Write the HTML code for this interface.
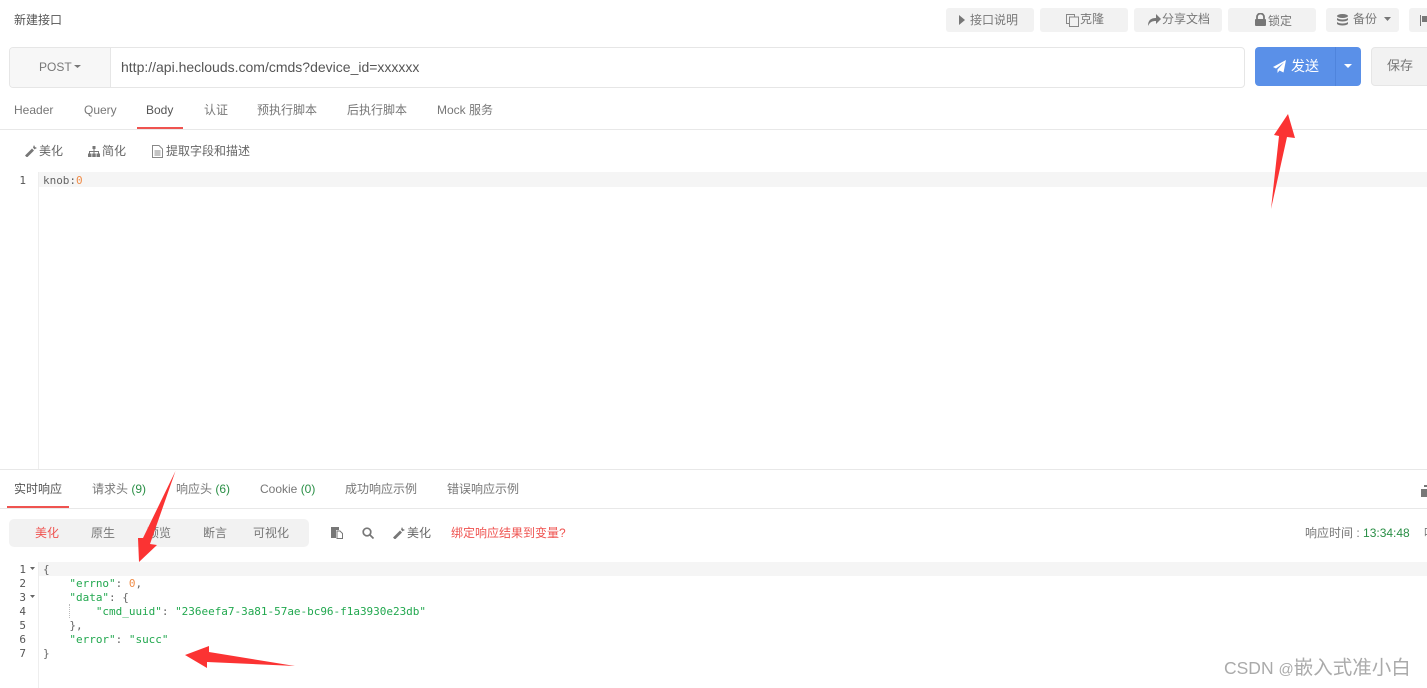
<!DOCTYPE html>
<html lang="zh"><head><meta charset="utf-8"><title>新建接口</title>
<style>
html,body{margin:0;padding:0;background:#fff}
#p{position:relative;width:1427px;height:688px;overflow:hidden;background:#fff;font-family:"Liberation Sans","Noto Sans CJK SC",sans-serif;font-size:12px;color:#777}
#p>*{position:absolute}
.t{height:20px;line-height:20px;white-space:nowrap}
.b{background:#f2f2f2;border-radius:3px;top:8px;height:24px}
.m{font-family:"DejaVu Sans Mono",monospace;font-size:11px;height:14px;line-height:14px;white-space:pre;color:#666;letter-spacing:-.02px}
.s{color:#22a84f}.o{color:#f08d49}.g{color:#2a8f46}
.n{color:#555;text-align:right;width:26px;left:0}
svg{display:block}
</style></head><body><div id="p">
<div class="t" style="left:14px;top:10px;color:#555">新建接口</div>

<div class="b" style="left:946px;width:88px"></div>
<div class="b" style="left:1040px;width:88px"></div>
<div class="b" style="left:1134px;width:88px"></div>
<div class="b" style="left:1228px;width:88px"></div>
<div class="b" style="left:1326px;width:73px"></div>
<div class="b" style="left:1409px;width:30px"></div>
<svg style="left:959px;top:15px" width="6" height="10"><path d="M0 0L6 5L0 10Z" fill="#777"/></svg>
<div class="t" style="left:970px;top:10px">接口说明</div>
<svg style="left:1066px;top:14px" width="13" height="13" fill="none" stroke="#888"><path d="M8.500 2.500V.5H.5V9.500H3"/><rect x="3.500" y="3" width="9" height="9.500"/></svg>
<div class="t" style="left:1080px;top:9px">克隆</div>
<svg style="left:1148px;top:14px" width="13" height="12"><path d="M0 12C0 6 3 4 8 4V0L13 5L8 10V7C4 7 2 8 0 12Z" fill="#777"/></svg>
<div class="t" style="left:1162px;top:9px">分享文档</div>
<svg style="left:1255px;top:13px" width="11" height="13"><path d="M2 6V4a3.500 3.500 0 017 0V6" fill="none" stroke="#777" stroke-width="1.800"/><rect y="6" width="11" height="7" rx="1" fill="#777"/></svg>
<div class="t" style="left:1268px;top:11px">锁定</div>
<svg style="left:1337px;top:14px" width="11" height="12"><g fill="#777"><ellipse cx="5.500" cy="2" rx="5.500" ry="2"/><path d="M0 4C2 6 9 6 11 4V6C9 8 2 8 0 6ZM0 8C2 10 9 10 11 8V10C9 12 2 12 0 10Z"/></g></svg>
<div class="t" style="left:1353px;top:9px">备份</div>
<svg style="left:1384px;top:17px" width="7" height="4"><path d="M0 0H7L3.500 4Z" fill="#777"/></svg>
<svg style="left:1420px;top:15px" width="7" height="11"><path d="M0 0H1V11H0ZM2 1H7V7H2Z" fill="#777"/></svg>

<div style="left:9px;top:47px;width:1234px;height:39px;border:1px solid #e6e6e6;border-radius:4px"></div>
<div style="left:10px;top:48px;width:100px;height:39px;background:#f7f7f7;border-right:1px solid #e6e6e6;border-radius:3px 0 0 3px"></div>
<div class="t" style="left:39px;top:57px;color:#777">POST</div>
<svg style="left:74px;top:65px" width="7" height="3"><path d="M0 0H7L3.500 3Z" fill="#777"/></svg>
<div class="t" style="left:121px;top:57px;font-size:14px;color:#555">http://api.heclouds.com/cmds?device_id=xxxxxx</div>

<div style="left:1255px;top:47px;width:106px;height:39px;background:#5a90e8;border-radius:4px"></div>
<div style="left:1335px;top:47px;width:1px;height:39px;background:#4f84dc"></div>
<svg style="left:1273px;top:60px" width="13" height="13"><path d="M13 0L10.500 12.500L6.500 10.500L4.500 13V9.500L11 2.500L3 8.500L0 7Z" fill="#fff"/></svg>
<div class="t" style="left:1291px;top:56px;font-size:14px;color:#fff">发送</div>
<svg style="left:1344px;top:64px" width="8" height="4"><path d="M0 0H8L4 4Z" fill="#fff"/></svg>
<div style="left:1371px;top:47px;width:70px;height:37px;background:#f2f2f2;border:1px solid #e6e6e6;border-radius:4px"></div>
<div class="t" style="left:1387px;top:56px;font-size:13px;color:#777">保存</div>

<div class="t" style="left:14px;top:100px">Header</div>
<div class="t" style="left:84px;top:100px">Query</div>
<div class="t" style="left:146px;top:100px;color:#555">Body</div>
<div class="t" style="left:204px;top:100px">认证</div>
<div class="t" style="left:257px;top:100px">预执行脚本</div>
<div class="t" style="left:347px;top:100px">后执行脚本</div>
<div class="t" style="left:437px;top:100px">Mock 服务</div>
<div style="left:0;top:129px;width:1427px;height:1px;background:#e8e8e8"></div>
<div style="left:137px;top:127px;width:46px;height:2px;background:#ef5350"></div>

<svg style="left:25px;top:145px" width="12" height="12"><path d="M0 10.500L7 3.500L9 5.500L2 12.500ZM8 2.500L9 0L10 2L12 3L10 4L9.500 4.500Z" fill="#777"/></svg>
<div class="t" style="left:39px;top:141px;color:#666">美化</div>
<svg style="left:88px;top:146px" width="12" height="11" fill="#777"><rect x="4.500" width="3" height="3"/><rect y="7.500" width="3.500" height="3.500"/><rect x="4.250" y="7.500" width="3.500" height="3.500"/><rect x="8.500" y="7.500" width="3.500" height="3.500"/><path d="M1 5H11V7.500H10V6H6.500V7.500H5.500V6H2V7.500H1ZM5.500 3H6.500V5H5.500Z"/></svg>
<div class="t" style="left:102px;top:141px;color:#666">简化</div>
<svg style="left:152px;top:145px" width="11" height="13" fill="none" stroke="#888"><path d="M.5.500H7L10.500 4V12.500H.5ZM2.500 6H8.500M2.500 8H8.500M2.500 10H8.500"/></svg>
<div class="t" style="left:166px;top:141px;color:#666">提取字段和描述</div>

<div style="left:38px;top:172px;width:1389px;height:15px;background:#f5f5f5"></div>
<div style="left:38px;top:172px;width:1px;height:297px;background:#eee"></div>
<div class="m n" style="top:174px">1</div>
<div class="m" style="left:43px;top:174px">knob:<span class="o">0</span></div>

<div style="left:0;top:469px;width:1427px;height:1px;background:#e8e8e8"></div>
<div class="t" style="left:14px;top:479px;color:#555">实时响应</div>
<div class="t" style="left:92px;top:479px">请求头 <span class="g">(9)</span></div>
<div class="t" style="left:176px;top:479px">响应头 <span class="g">(6)</span></div>
<div class="t" style="left:260px;top:479px">Cookie <span class="g">(0)</span></div>
<div class="t" style="left:345px;top:479px">成功响应示例</div>
<div class="t" style="left:447px;top:479px">错误响应示例</div>
<div style="left:0;top:508px;width:1427px;height:1px;background:#e8e8e8"></div>
<div style="left:7px;top:506px;width:62px;height:2px;background:#ef5350"></div>
<svg style="left:1421px;top:485px" width="6" height="12"><path d="M3 0H6V2H3V4H6V12H0V4H3Z" fill="#777"/></svg>

<div style="left:9px;top:519px;width:300px;height:28px;background:#f2f2f2;border-radius:5px"></div>
<div class="t" style="left:35px;top:523px;color:#ef5350">美化</div>
<div class="t" style="left:91px;top:523px">原生</div>
<div class="t" style="left:147px;top:523px">预览</div>
<div class="t" style="left:203px;top:523px">断言</div>
<div class="t" style="left:253px;top:523px">可视化</div>
<svg style="left:331px;top:527px" width="12" height="12"><path d="M0 0H8V3H5V11H0Z" fill="#777"/><path d="M6 4H9L11.500 6.500V11.500H6Z" fill="#fff" stroke="#777"/></svg>
<svg style="left:362px;top:527px" width="12" height="12" fill="none" stroke="#777" stroke-width="1.700"><circle cx="5" cy="5" r="3.800"/><path d="M8 8L11.500 11.500"/></svg>
<svg style="left:393px;top:527px" width="12" height="12"><path d="M0 10.500L7 3.500L9 5.500L2 12.500ZM8 2.500L9 0L10 2L12 3L10 4L9.500 4.500Z" fill="#777"/></svg>
<div class="t" style="left:407px;top:523px;color:#666">美化</div>
<div class="t" style="left:451px;top:523px;color:#ef5350">绑定响应结果到变量?</div>
<div class="t" style="left:1305px;top:523px">响应时间 : <span class="g">13:34:48</span></div>
<div class="t" style="left:1424px;top:523px">响</div>

<div style="left:38px;top:562px;width:1389px;height:14px;background:#f5f5f5"></div>
<div style="left:38px;top:562px;width:1px;height:126px;background:#eee"></div>
<div class="m n" style="top:563px">1</div>
<div class="m n" style="top:577px">2</div>
<div class="m n" style="top:591px">3</div>
<div class="m n" style="top:605px">4</div>
<div class="m n" style="top:619px">5</div>
<div class="m n" style="top:633px">6</div>
<div class="m n" style="top:647px">7</div>
<svg style="left:30px;top:567px" width="5" height="3"><path d="M0 0H5L2.500 3Z" fill="#666"/></svg>
<svg style="left:30px;top:595px" width="5" height="3"><path d="M0 0H5L2.500 3Z" fill="#666"/></svg>
<div class="m" style="left:43px;top:563px">{</div>
<div class="m" style="left:43px;top:577px">    <span class="s">"errno"</span>: <span class="o">0</span>,</div>
<div class="m" style="left:43px;top:591px">    <span class="s">"data"</span>: {</div>
<div class="m" style="left:43px;top:605px">        <span class="s">"cmd_uuid"</span>: <span class="s">"236eefa7-3a81-57ae-bc96-f1a3930e23db"</span></div>
<div class="m" style="left:43px;top:619px">    },</div>
<div class="m" style="left:43px;top:633px">    <span class="s">"error"</span>: <span class="s">"succ"</span></div>
<div class="m" style="left:43px;top:647px">}</div>
<div style="left:69px;top:604px;height:14px;border-left:1px dotted #bbb"></div>

<svg style="left:0;top:0" width="1427" height="688"><g fill="#fb3333">
<path d="M1288 114L1295 138L1287 137L1271 209L1279 136L1274 135Z"/>
<path d="M175.500 471L150 544L157 545L139 562L138 538L143 538Z"/>
<path d="M185 655L209 646L209 652L295 666L207 662L207 668Z"/>
</g></svg>
<div class="t" style="left:1224px;top:658px;font-size:17.500px;color:#aaa">CSDN <span style="font-size:15px">@</span><span style="font-size:19.500px">嵌入式准小白</span></div>
</div></body></html>
